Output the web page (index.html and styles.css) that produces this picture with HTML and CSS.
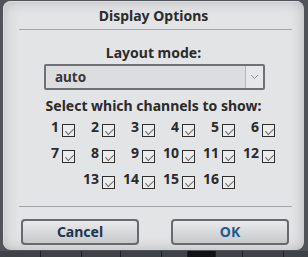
FILE: index.html
```html
<!DOCTYPE html>
<html>
<head>
<meta charset="utf-8">
<link rel="stylesheet" href="styles.css">
</head>
<body>
<div class="dialog">
  <div class="title">Display Options</div>
  <div class="sep"></div>
  <div class="label">Layout mode:</div>
  <div class="select">
    <span class="select-text">auto</span>
    <span class="select-arrow"><svg width="9" height="6" viewBox="0 0 9 6"><path d="M1 1 L4.5 4.5 L8 1" fill="none" stroke="#8a8c8e" stroke-width="1"/></svg></span>
  </div>
  <div class="label label2">Select which channels to show:</div>
  <div class="grid">
    <div class="cell"><span>1</span><i class="cb"></i></div>
    <div class="cell"><span>2</span><i class="cb"></i></div>
    <div class="cell"><span>3</span><i class="cb"></i></div>
    <div class="cell"><span>4</span><i class="cb"></i></div>
    <div class="cell"><span>5</span><i class="cb"></i></div>
    <div class="cell"><span>6</span><i class="cb"></i></div>
    <div class="cell"><span>7</span><i class="cb"></i></div>
    <div class="cell"><span>8</span><i class="cb"></i></div>
    <div class="cell"><span>9</span><i class="cb"></i></div>
    <div class="cell"><span>10</span><i class="cb"></i></div>
    <div class="cell"><span>11</span><i class="cb"></i></div>
    <div class="cell"><span>12</span><i class="cb"></i></div>
    <div class="cell"><span>13</span><i class="cb"></i></div>
    <div class="cell"><span>14</span><i class="cb"></i></div>
    <div class="cell"><span>15</span><i class="cb"></i></div>
    <div class="cell"><span>16</span><i class="cb"></i></div>
  </div>
  <div class="sep sep2"></div>
  <div class="buttons">
    <div class="btn cancel">Cancel</div>
    <div class="btn ok">OK</div>
  </div>
</div>
<div class="strip">
  <div class="seg" style="width:40px"></div>
  <div class="seg" style="width:40px"></div>
  <div class="seg" style="width:38px"></div>
  <div class="seg" style="width:40px"></div>
  <div class="seg" style="width:25px"></div>
  <div class="seg black" style="width:27px"></div>
  <div class="seg" style="width:26px"></div>
  <div class="seg" style="width:40px"></div>
</div>
</body>
</html>
```
FILE: styles.css
```css
html, body {
  margin: 0;
  padding: 0;
}
body {
  width: 308px;
  height: 257px;
  overflow: hidden;
  background: #505357;
  font-family: "Noto Sans", Lato, sans-serif;
  font-weight: 700;
  color: #2b2b2b;
}
.dialog {
  box-sizing: border-box;
  margin: 1px 0 0 3px;
  width: 301px;
  height: 249px;
  border-radius: 8px;
  background: #e3e4e5;
  box-shadow: inset 0 0 14px rgba(90, 95, 100, 0.35), inset 1px 1px 0 rgba(255,255,255,0.7);
  padding-top: 5px;
}
.title {
  text-align: center;
  font-size: 14px;
  line-height: 20px;
  height: 20px;
}
.sep {
  height: 1px;
  background: #a3a5a8;
  margin: 3px 12px 0 16px;
}
.label {
  text-align: center;
  font-size: 14px;
  line-height: 20px;
  margin-top: 13px;
}
.select {
  box-sizing: border-box;
  width: 221px;
  height: 26px;
  margin: 1px 0 0 41px;
  border: 2px solid #6f7174;
  border-radius: 2px;
  background: #dcdddf;
  display: flex;
  align-items: stretch;
}
.select-text {
  flex: 1;
  padding-left: 9px;
  font-size: 13.5px;
  line-height: 22px;
  color: #383838;
}
.select-arrow {
  width: 17px;
  border-left: 1px solid #b4b6b8;
  background: #e6e7e8;
  display: flex;
  align-items: center;
  justify-content: center;
}
.label2 {
  margin-top: 6px;
}
.grid {
  width: 240px;
  margin: 0 0 0 32px;
  display: flex;
  flex-wrap: wrap;
  justify-content: center;
}
.cell {
  width: 40px;
  height: 26px;
  display: flex;
  align-items: center;
  justify-content: flex-end;
  font-size: 14px;
}
.cell span {
  margin-right: 3px;
  line-height: 16px;
  position: relative;
  top: -2px;
}
.cb {
  box-sizing: border-box;
  width: 13px;
  height: 13px;
  border: 1px solid #2e2e2e;
  background: #ececec;
  position: relative;
  top: 1px;
}
.cb::after {
  content: "";
  position: absolute;
  left: 2px;
  top: 1px;
  width: 7px;
  height: 4px;
  border-left: 1px solid #6a6a6a;
  border-bottom: 1px solid #6a6a6a;
  transform: translate(0.5px, 2px) rotate(-45deg) skewX(-5deg);
}
.sep2 {
  margin-top: 12px;
}
.buttons {
  display: flex;
  justify-content: space-between;
  padding: 0 15px 0 18px;
  margin-top: 12px;
}
.btn {
  box-sizing: border-box;
  width: 118px;
  height: 26px;
  border: 2px solid #676a6e;
  border-radius: 4px;
  background: linear-gradient(#e9eaeb, #c7c9cb);
  text-align: center;
  font-size: 14px;
  line-height: 22px;
}
.cancel { color: #1d3550; }
.ok { color: #1f5b8e; }
.strip {
  display: flex;
  margin-top: 1px;
  height: 6px;
  background: #3f4246;
}
.seg {
  height: 6px;
  border-right: 1px solid #1e2022;
}
.seg.black {
  background: #111214;
}
```
